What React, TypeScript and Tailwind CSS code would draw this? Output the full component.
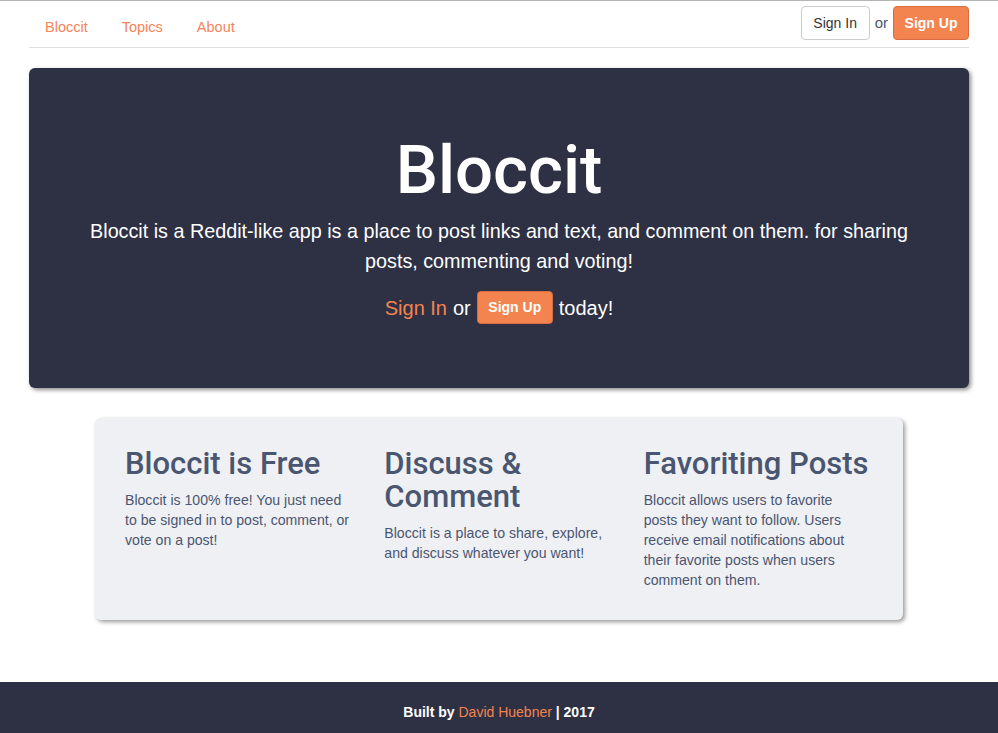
import type { ReactNode } from "react";

export default function App() {
  const features: { title: string; text: ReactNode }[] = [
    {
      title: "Bloccit is Free",
      text: "Bloccit is 100% free! You just need to be signed in to post, comment, or vote on a post!",
    },
    {
      title: "Discuss & Comment",
      text: "Bloccit is a place to share, explore, and discuss whatever you want!",
    },
    {
      title: "Favoriting Posts",
      text: (
        <>
          Bloccit allows users to favorite
          <br />
          posts they want to follow. Users
          <br />
          receive email notifications about
          <br />
          their favorite posts when users
          <br />
          comment on them.
        </>
      ),
    },
  ];

  return (
    <div className="min-h-[733px] bg-white font-['Liberation_Sans',Arial,sans-serif] flex flex-col">
      <div className="h-px bg-[#b4b4b4]" />
      <nav className="mx-auto w-[940px] h-[47px] flex justify-between border-b border-[#dddddd]">
        <ul className="flex pt-[16px] pl-[16px] gap-[34px] text-[14.5px] leading-[20px] text-[#f5845a]">
          <li>Bloccit</li>
          <li>Topics</li>
          <li>About</li>
        </ul>
        <div className="flex items-center gap-[5px] self-start mt-[5px] text-[14px]">
          <button className="h-[34px] w-[69px] rounded border border-[#cccccc] bg-white text-[#333]">
            Sign In
          </button>
          <span className="text-[#4a5670] text-[15px]">or</span>
          <button className="h-[34px] w-[76px] rounded border border-[#d96c3e] bg-[#f4844f] text-white font-bold">
            Sign Up
          </button>
        </div>
      </nav>

      <section className="mx-auto mt-[20px] w-[940px] h-[320px] rounded-md bg-[#2e3044] shadow-[2px_2px_4px_rgba(0,0,0,0.45)] px-[50px] pt-[65px] text-center text-white">
        <h1 className="font-['Roboto',sans-serif] text-[67px] leading-[74px] font-medium">Bloccit</h1>
        <p className="mt-[9px] text-[19.75px] leading-[30px]">
          Bloccit is a Reddit-like app is a place to post links and text, and comment on them. for sharing
          <br />
          posts, commenting and voting!
        </p>
        <div className="mt-[15px] flex justify-center items-center gap-[6px] text-[20px]">
          <span className="text-[#f4844f]">Sign In</span>
          <span>or</span>
          <button className="h-[33px] w-[76px] rounded border border-[#d96c3e] bg-[#f4844f] text-white text-[14px] font-bold">
            Sign Up
          </button>
          <span>today!</span>
        </div>
      </section>

      <section className="mx-auto mt-[30px] w-[808px] rounded-md bg-[#eff0f4] shadow-[2px_2px_4px_rgba(0,0,0,0.4)] px-[15px] pt-[29px] pb-[30px] grid grid-cols-3">
        {features.map((f) => (
          <div key={f.title} className="px-[15px] text-[#4a5670]">
            <h2 className="font-['Roboto',sans-serif] text-[31px] leading-[33px] font-medium">{f.title}</h2>
            <p className="mt-[10px] text-[14.1px] leading-[20px]">{f.text}</p>
          </div>
        ))}
      </section>

      <footer className="mt-auto h-[51px] bg-[#2e3044] pt-[20px] text-center text-[14px] leading-[20px] font-bold text-white">
        Built by <span className="text-[#f4844f] font-normal">David Huebner</span> | 2017
      </footer>
    </div>
  );
}
